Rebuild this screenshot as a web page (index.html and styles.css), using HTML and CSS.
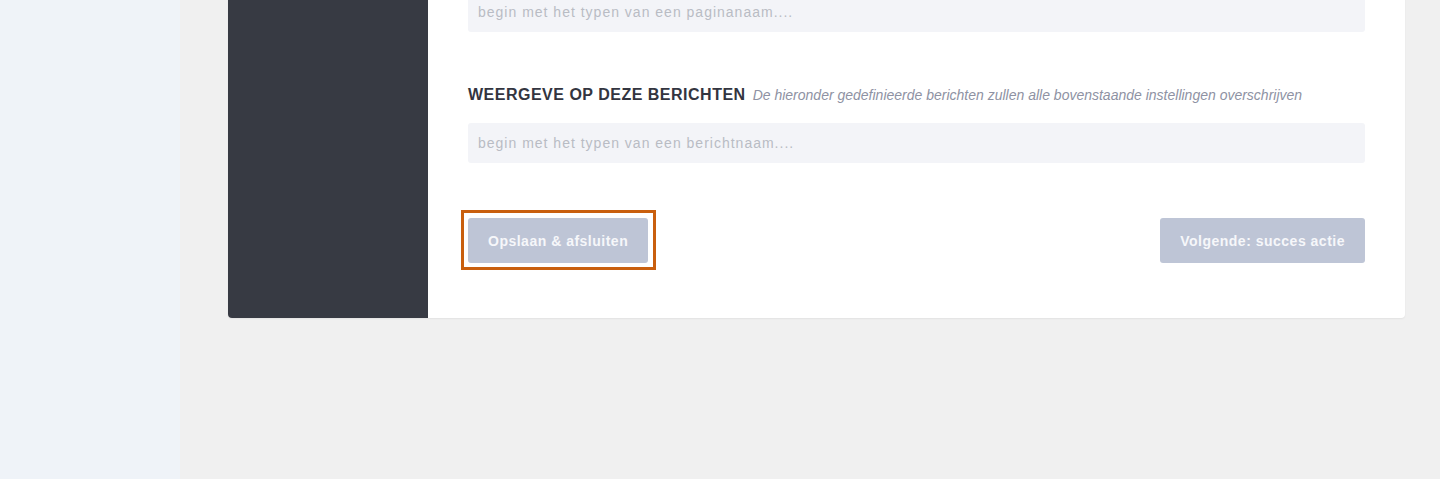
FILE: index.html
```html
<!DOCTYPE html>
<html lang="nl">
<head>
<meta charset="utf-8">
<title>Weergave instellingen</title>
<link rel="stylesheet" href="styles.css">
</head>
<body>
<div class="layout">
  <aside class="sidebar"></aside>
  <main class="main">
    <section class="card">
      <div class="card-side"></div>
      <div class="card-body">
        <div class="field-input">begin met het typen van een paginanaam....</div>
        <div class="field-head">
          <span class="field-title">WEERGEVE OP DEZE BERICHTEN</span>
          <span class="field-hint">De hieronder gedefinieerde berichten zullen alle bovenstaande instellingen overschrijven</span>
        </div>
        <div class="field-input">begin met het typen van een berichtnaam....</div>
        <div class="actions">
          <button class="btn btn-focus">Opslaan &amp; afsluiten</button>
          <button class="btn">Volgende: succes actie</button>
        </div>
      </div>
    </section>
  </main>
</div>
</body>
</html>
```
FILE: styles.css
```css
html, body {
  margin: 0;
  padding: 0;
  height: 100%;
}
body {
  font-family: "Liberation Sans", Arial, sans-serif;
  background: #f0f0f0;
  overflow: hidden;
}
.layout {
  display: flex;
  height: 479px;
}
.sidebar {
  width: 180px;
  flex: 0 0 180px;
  background: #eff3f8;
}
.main {
  flex: 1;
  padding: 0 35px 0 48px;
}
.card {
  display: flex;
  margin-top: -8px;
  background: #ffffff;
  border-radius: 0 0 4px 4px;
  box-shadow: 0 1px 2px rgba(0, 0, 0, 0.06);
}
.card-side {
  width: 200px;
  flex: 0 0 200px;
  background: #373a43;
  border-bottom-left-radius: 4px;
}
.card-body {
  flex: 1;
  padding: 0 40px 55px 40px;
}
.field-input {
  height: 40px;
  line-height: 40px;
  background: #f3f4f8;
  border-radius: 3px;
  padding: 0 10px;
  font-size: 14px;
  letter-spacing: 1px;
  color: #b9bcc4;
}
.field-head {
  margin: 53px 0 18px;
  line-height: 20px;
  display: flex;
  align-items: baseline;
  gap: 7px;
}
.field-title {
  font-size: 16px;
  font-weight: bold;
  letter-spacing: 0.5px;
  color: #333540;
}
.field-hint {
  font-size: 14px;
  font-style: italic;
  color: #8e92a3;
}
.actions {
  margin-top: 55px;
  display: flex;
  justify-content: space-between;
}
.btn {
  height: 45px;
  padding: 0 20px;
  border: none;
  border-radius: 3px;
  background: #bec5d6;
  color: #f6f7fa;
  font-family: "Liberation Sans", Arial, sans-serif;
  font-size: 14px;
  font-weight: bold;
  letter-spacing: 0.5px;
  white-space: nowrap;
}
.btn-focus {
  position: relative;
  outline: none;
}
.btn-focus::before {
  content: "";
  position: absolute;
  top: -8px;
  left: -7px;
  right: -8px;
  bottom: -7px;
  border: 3px solid #c95f0e;
}
```
